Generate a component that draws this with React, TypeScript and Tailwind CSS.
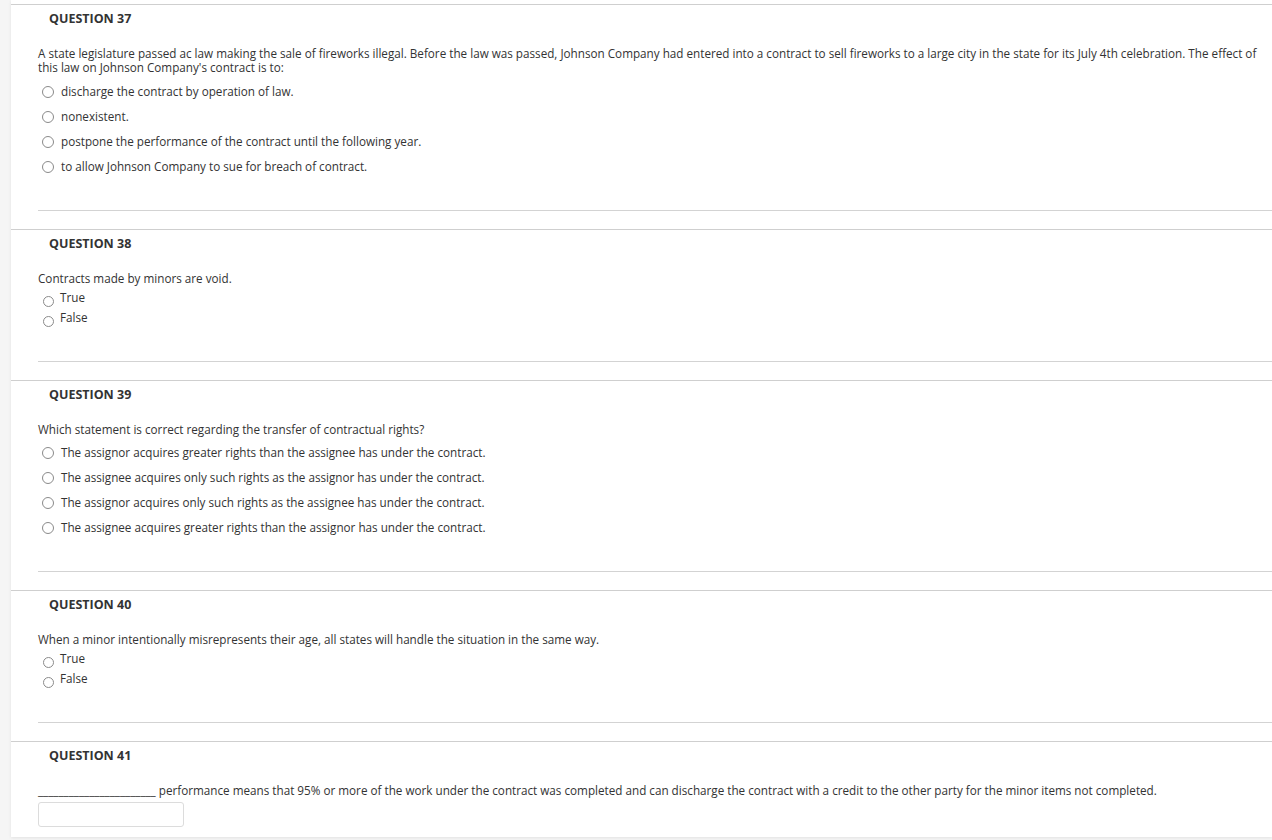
import React from "react";

const font = { fontFamily: '"Open Sans", "Noto Sans", sans-serif' };

function Radio({ small }: { small?: boolean }) {
  return small ? (
    <span className="mt-[6px] ml-[5px] mr-[6px] inline-block h-[11px] w-[11px] shrink-0 rounded-full border border-[#8a8a8a] bg-white" />
  ) : (
    <span className="ml-[4px] mr-[7px] inline-block h-[12px] w-[12px] shrink-0 rounded-full border border-[#8a8a8a] bg-white" />
  );
}

function Title({ n }: { n: number }) {
  return (
    <div className="mt-[5px] ml-[11px] text-[12.5px] leading-[18px] font-bold text-[#333]">
      QUESTION {n}
    </div>
  );
}

function MC({
  n,
  text,
  options,
  tight,
}: {
  n: number;
  text: React.ReactNode;
  options: string[];
  tight?: boolean;
}) {
  return (
    <section className="border-t border-[#cfcfcf] pl-[27px]">
      <Title n={n} />
      <div className="mt-[18px] text-[11.7px] leading-[14px] text-[#333]">{text}</div>
      <div className={tight ? "mt-[4px] flex flex-col" : "mt-[5px] flex flex-col"}>
        {options.map((o) => (
          <div key={o} className="flex h-[25px] items-center text-[11.7px] text-[#333]">
            <Radio />
            <span>{o}</span>
          </div>
        ))}
      </div>
      <div className="mt-[31px] mb-[18px] border-t border-[#d3d3d3]" />
    </section>
  );
}

function TF({ n, text }: { n: number; text: string }) {
  return (
    <section className="border-t border-[#cfcfcf] pl-[27px]">
      <Title n={n} />
      <div className="mt-[18px] text-[11.7px] leading-[14px] text-[#333]">{text}</div>
      <div className="mt-[3px] flex flex-col">
        {["True", "False"].map((o) => (
          <div key={o} className="flex h-[20px] items-center text-[11.7px] text-[#333]">
            <Radio small />
            <span>{o}</span>
          </div>
        ))}
      </div>
      <div className="mt-[33px] mb-[18px] border-t border-[#d3d3d3]" />
    </section>
  );
}

export default function App() {
  return (
    <div className="flex min-h-[840px] w-full bg-[#f5f5f5]" style={font}>
      <div className="w-[11px] shrink-0" />
      <div className="flex h-[837px] flex-1 flex-col overflow-hidden bg-white pt-[4px] shadow-[0_1px_3px_rgba(0,0,0,0.08)]">
        <MC
          n={37}
          text={
            <>
              A state legislature passed ac law making the sale of fireworks illegal. Before the law was passed, Johnson Company had entered into a contract to sell fireworks to a large city in the state for its July 4th celebration. The effect of this law on Johnson Company's contract is to:
            </>
          }
          options={[
            "discharge the contract by operation of law.",
            "nonexistent.",
            "postpone the performance of the contract until the following year.",
            "to allow Johnson Company to sue for breach of contract.",
          ]}
        />
        <TF n={38} text="Contracts made by minors are void." />
        <MC
          n={39}
          tight
          text="Which statement is correct regarding the transfer of contractual rights?"
          options={[
            "The assignor acquires greater rights than the assignee has under the contract.",
            "The assignee acquires only such rights as the assignor has under the contract.",
            "The assignor acquires only such rights as the assignee has under the contract.",
            "The assignee acquires greater rights than the assignor has under the contract.",
          ]}
        />
        <TF
          n={40}
          text="When a minor intentionally misrepresents their age, all states will handle the situation in the same way."
        />
        <section className="border-t border-[#cfcfcf] pl-[27px]">
          <Title n={41} />
          <div className="mt-[18px] text-[11.7px] leading-[14px] text-[#333]">
            _______________________ performance means that 95% or more of the work under the contract was completed and can discharge the contract with a credit to the other party for the minor items not completed.
          </div>
          <div className="mt-[5px] h-[25px] w-[146px] rounded-[3px] border border-[#dcdcdc] bg-white" />
        </section>
      </div>
    </div>
  );
}
